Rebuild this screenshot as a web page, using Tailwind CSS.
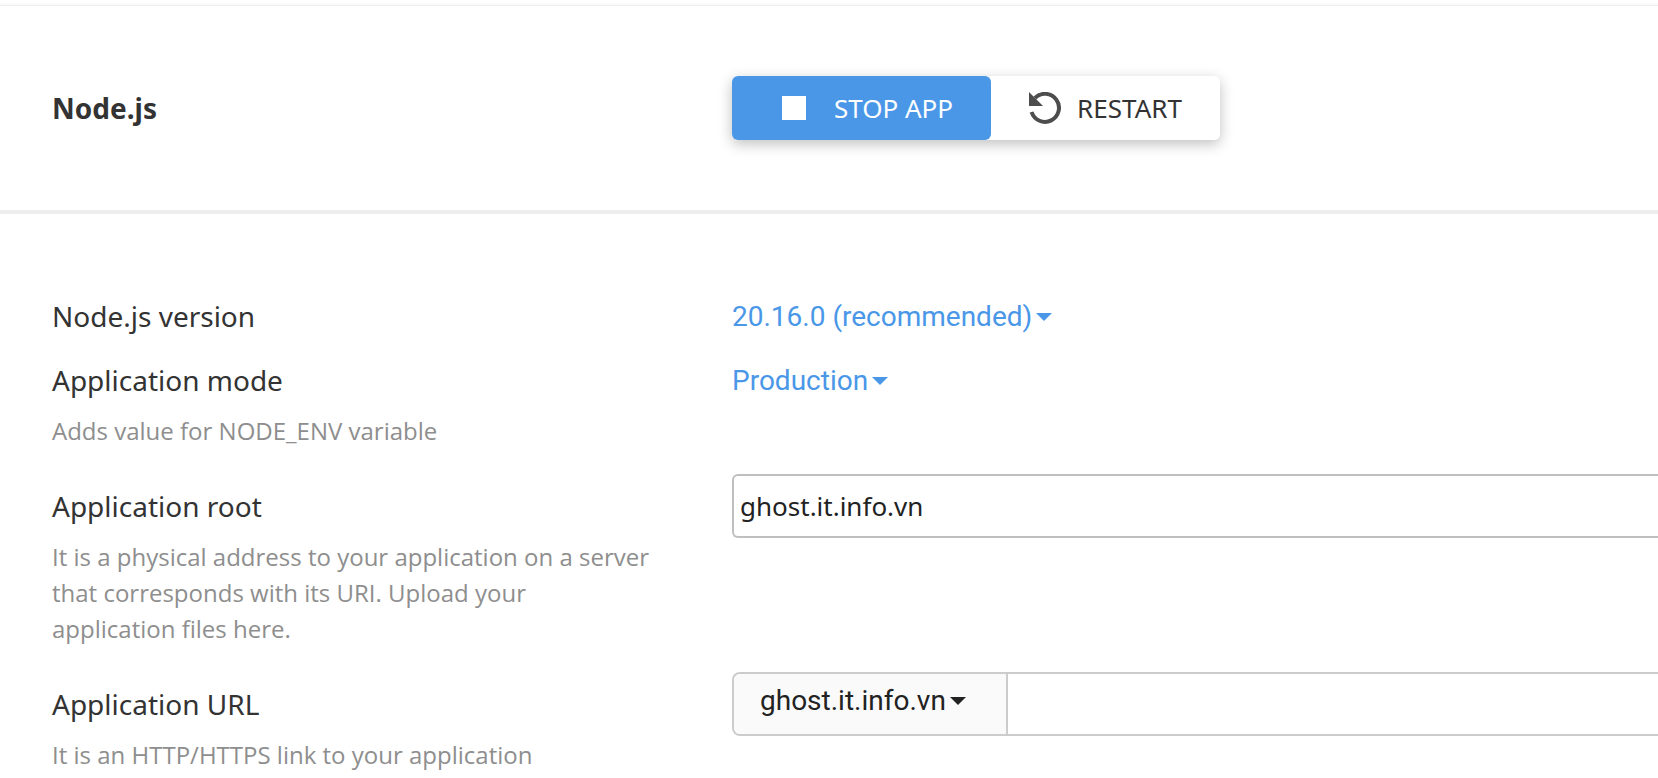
<!DOCTYPE html>
<html lang="en">
<head>
    <meta charset="UTF-8">
    <meta name="viewport" content="width=device-width, initial-scale=1.0">
    <title>Node.js</title>
    <script src="https://cdn.jsdelivr.net/npm/@tailwindcss/browser@4"></script>
</head>
<body class="bg-white font-['Noto_Sans',sans-serif] text-[28px] text-[#333333] overflow-x-hidden">
    <!-- Header with app controls -->
    <header class="pt-[3px] border-b-4 border-[#eeeeee]">
        <div class="h-[3px] bg-[#fafafa] border-b border-[#eeeeee]"></div>
        <div class="flex items-center pl-[52px] pt-[70px] pb-[70px]">
            <h1 class="w-[680px] shrink-0 font-bold">Node.js</h1>
            <div class="flex rounded-md text-[26px] shadow-[0_4px_14px_rgba(0,0,0,0.25)]">
                <button type="button" class="flex items-center h-16 pl-[50px] pr-[38px] gap-7 rounded-md bg-[#4a97e8] text-white">
                    <span class="size-6 bg-white"></span>
                    STOP APP
                </button>
                <button type="button" class="flex items-center h-16 pl-[38px] pr-[38px] gap-4 rounded-md bg-white">
                    <svg class="size-8" viewBox="0 0 32 32" fill="none" aria-hidden="true">
                        <path d="M6 6A14 14 0 1 1 2.6 20" stroke="#4d4d4d" stroke-width="4"/>
                        <path d="M0 0V14H14Z" fill="#4d4d4d"/>
                    </svg>
                    RESTART
                </button>
            </div>
        </div>
    </header>

    <!-- Application settings -->
    <form class="pl-[52px] pt-[70px]">
        <div class="flex">
            <div class="w-[680px] shrink-0">
                <label for="version" class="block leading-[64px]">Node.js version</label>
            </div>
            <div class="flex items-center h-16 pt-0.5 gap-1 font-['Roboto',sans-serif] text-[#4a97e8]">
                <select id="version" class="appearance-none field-sizing-content">
                    <option>20.16.0 (recommended)</option>
                </select>
                <svg class="w-4 h-2 pointer-events-none" viewBox="0 0 16 8" fill="currentColor" aria-hidden="true"><path d="M0 0H16L8 8Z"/></svg>
            </div>
        </div>

        <div class="flex pb-[25px]">
            <div class="w-[680px] shrink-0">
                <label for="mode" class="block leading-[64px]">Application mode</label>
                <p class="mt-px max-w-[600px] font-['Open_Sans',sans-serif] text-2xl leading-9 text-[#8e8e8e]">Adds value for NODE_ENV variable</p>
            </div>
            <div class="flex items-center h-16 pt-0.5 gap-1 font-['Roboto',sans-serif] text-[#4a97e8]">
                <select id="mode" class="appearance-none field-sizing-content">
                    <option>Production</option>
                </select>
                <svg class="w-4 h-2 pointer-events-none" viewBox="0 0 16 8" fill="currentColor" aria-hidden="true"><path d="M0 0H16L8 8Z"/></svg>
            </div>
        </div>

        <div class="flex pb-[25px]">
            <div class="w-[680px] shrink-0">
                <label for="root" class="block leading-[64px]">Application root</label>
                <p class="mt-px max-w-[600px] font-['Open_Sans',sans-serif] text-2xl leading-9 text-[#8e8e8e]">It is a physical address to your application on a server that corresponds with its URI. Upload your application files here.</p>
            </div>
            <input id="root" type="text" value="ghost.it.info.vn" class="grow min-w-0 h-16 px-1.5 rounded-l-md border-2 border-r-0 border-[#bfbfbf] text-[26px] text-[#222222]">
        </div>

        <div class="flex">
            <div class="w-[680px] shrink-0">
                <label for="url" class="block leading-[64px]">Application URL</label>
                <p class="mt-px max-w-[600px] font-['Open_Sans',sans-serif] text-2xl leading-9 text-[#8e8e8e]">It is an HTTP/HTTPS link to your application</p>
            </div>
            <div class="flex grow min-w-0 h-16 rounded-l-lg border-2 border-r-0 border-[#cccccc] text-[#222222] overflow-hidden">
                <div class="flex items-center pl-[26px] pr-10 pb-1.5 gap-1 border-r-2 border-[#cccccc] bg-[#fafafa] font-['Roboto',sans-serif]">
                    <select id="domain" aria-label="Domain" class="appearance-none field-sizing-content">
                        <option>ghost.it.info.vn</option>
                    </select>
                    <svg class="w-4 h-2 pointer-events-none" viewBox="0 0 16 8" fill="currentColor" aria-hidden="true"><path d="M0 0H16L8 8Z"/></svg>
                </div>
                <input id="url" type="text" class="grow min-w-0 px-1.5 text-[26px]">
            </div>
        </div>
    </form>
</body>
</html>
